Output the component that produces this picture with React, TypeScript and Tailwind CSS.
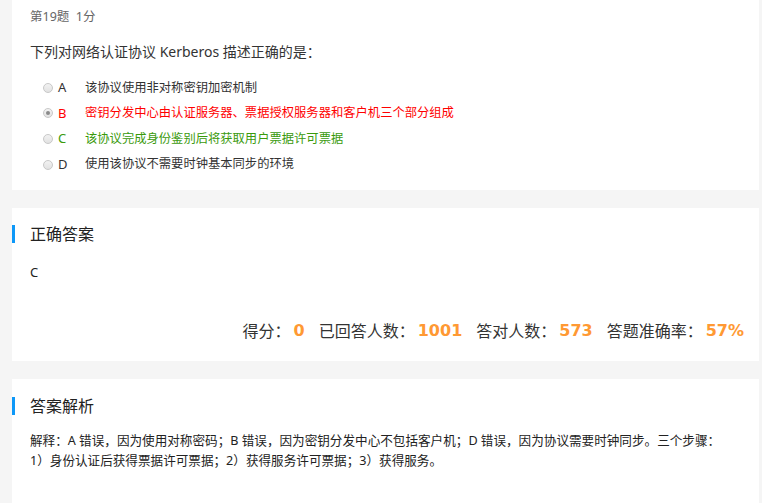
import React from "react";

const options = [
  { k: "A", t: "该协议使用非对称密钥加密机制", c: "text-[#333333]", checked: false },
  { k: "B", t: "密钥分发中心由认证服务器、票据授权服务器和客户机三个部分组成", c: "text-[#ff0000]", checked: true },
  { k: "C", t: "该协议完成身份鉴别后将获取用户票据许可票据", c: "text-[#3a9a0c]", checked: false },
  { k: "D", t: "使用该协议不需要时钟基本同步的环境", c: "text-[#333333]", checked: false },
];

function Radio({ checked }: { checked: boolean }) {
  return (
    <span className="w-[10px] h-[10px] rounded-full border border-[#c8c8c8] bg-gradient-to-b from-[#f2f2f2] to-[#e2e2e2] flex items-center justify-center shrink-0">
      {checked && <span className="w-[4px] h-[4px] rounded-full bg-[#8a8a8a]" />}
    </span>
  );
}

function Stat({ label, value }: { label: string; value: string }) {
  return (
    <span className="flex items-center">
      <span className="text-[16px] text-[#333333]">{label}</span>
      <span className="ml-[3px] text-[16px] font-bold text-[#ff9933] font-['DejaVu_Sans',sans-serif]">{value}</span>
    </span>
  );
}

export default function App() {
  return (
    <div className="min-h-screen bg-[#f5f5f5] pl-[12px] pr-[3px] font-['Noto_Sans','Noto_Sans_CJK_SC',sans-serif] text-[#333333]">
      <div className="bg-white h-[190px] px-[18px] pt-[9px]">
        <div className="text-[12.5px] leading-[16px] text-[#666666]">第19题&nbsp;&nbsp;1分</div>
        <div className="mt-[16px] text-[14px] leading-[22px] text-[#333333]">下列对网络认证协议 Kerberos 描述正确的是：</div>
        <div className="mt-[12px] flex flex-col">
          {options.map((o) => (
            <div key={o.k} className={`h-[25.6px] flex items-center pl-[13px] text-[12.3px] ${o.c}`}>
              <Radio checked={o.checked} />
              <span className="ml-[5px] w-[27px] text-[13px]">{o.k}</span>
              <span>{o.t}</span>
            </div>
          ))}
        </div>
      </div>

      <div className="mt-[18px] bg-white h-[153px] pl-[18px] pr-[15px] pt-[17px] flex flex-col">
        <div className="-ml-[18px] pl-[15px] border-l-[3px] border-[#0d98f8] h-[18px] flex items-center text-[16px] text-[#222222]">正确答案</div>
        <div className="mt-[19px] text-[13px] leading-[20px] text-[#222222]">C</div>
        <div className="mt-[39px] flex items-center justify-end gap-[14px] h-[20px]">
          <Stat label="得分：" value="0" />
          <Stat label="已回答人数：" value="1001" />
          <Stat label="答对人数：" value="573" />
          <Stat label="答题准确率：" value="57%" />
        </div>
      </div>

      <div className="mt-[18px] bg-white h-[124px] pl-[18px] pr-[15px] pt-[18px]">
        <div className="-ml-[18px] pl-[15px] border-l-[3px] border-[#0d98f8] h-[18px] flex items-center text-[16px] text-[#222222]">答案解析</div>
        <div className="mt-[16px] text-[12.6px] leading-[19.5px] text-[#222222]">
          <div>解释：A 错误，因为使用对称密码；B 错误，因为密钥分发中心不包括客户机；D 错误，因为协议需要时钟同步。三个步骤：</div>
          <div>1）身份认证后获得票据许可票据；2）获得服务许可票据；3）获得服务。</div>
        </div>
      </div>
    </div>
  );
}
